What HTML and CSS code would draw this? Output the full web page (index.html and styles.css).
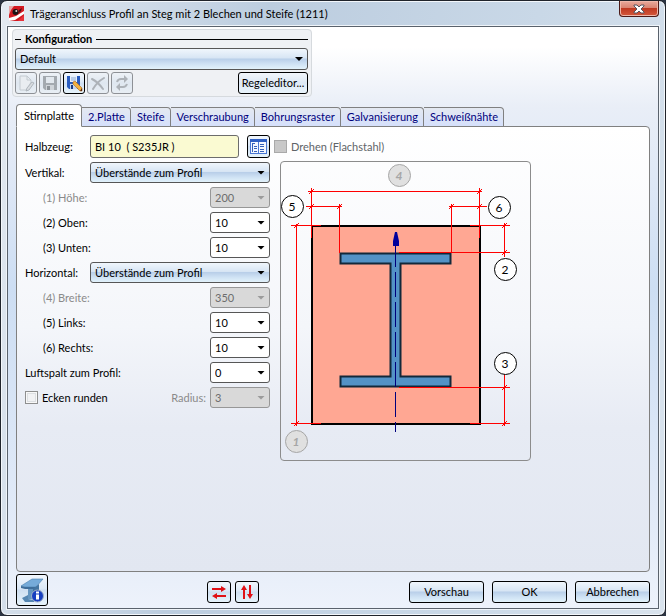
FILE: index.html
```html
<!DOCTYPE html>
<html lang="de">
<head>
<meta charset="utf-8">
<meta name="viewport" content="width=device-width, initial-scale=1">
<title>Trägeranschluss Profil an Steg mit 2 Blechen und Steife (1211)</title>
<link rel="stylesheet" href="styles.css">
</head>
<body>
<div class="window">
  <header class="titlebar">
    <svg class="app-icon" viewBox="0 0 15 15" aria-hidden="true">
      <path fill="#d21a22" d="M0 0h15v15H0z"/>
      <path fill="#e9a9a9" d="M0 0h5L2 4 0 9z"/>
      <path fill="#fff" d="M15 5v3L6 14l-6 1v-3l7-2z"/>
      <path fill="#e8323a" d="M9 15l6-6v6z"/>
      <circle cx="6.500" cy="6" r="3" fill="#1a1214"/>
      <circle cx="7.300" cy="5" r="1" fill="#d8d0d0"/>
      <path fill="#4b1216" d="M10 4l3-2-1 3-3 3z"/>
    </svg>
    <h1 class="title">Trägeranschluss Profil an Steg mit 2 Blechen und Steife (1211)</h1>
    <button class="close" type="button" aria-label="Schließen">
      <svg viewBox="0 0 12 10" aria-hidden="true">
        <path d="M1 1h3l2 2 2-2h3v1L8 5l3 3v1H8L6 7 4 9H1V8l3-3-3-3z" fill="#fff" stroke="#57555f"/>
      </svg>
    </button>
  </header>

  <main class="client">
    <fieldset class="config">
      <legend class="config-head">Konfiguration</legend>
      <div class="combo combo-blue combo-wide">
        <select aria-label="Konfiguration"><option>Default</option></select>
      </div>
      <div class="toolbar">
        <button class="tool" type="button" disabled aria-label="Neu">
          <svg viewBox="0 0 18 18" aria-hidden="true"><path d="M3 2h7l4 4v2l-4 8H3z" fill="#e9edf1" stroke="#c3cad0"/><path d="M10 2v4h4" fill="none" stroke="#c3cad0"/><path d="M15 8l2 1-5 7-3 1 1-3z" fill="#d9dde1" stroke="#b0b7be"/></svg>
        </button>
        <button class="tool" type="button" disabled aria-label="Speichern">
          <svg viewBox="0 0 18 18" aria-hidden="true"><path d="M2 2h14v14H4l-2-2z" fill="#a3a9af"/><path d="M5 3h8v6H5z" fill="#e2e8ee"/><path d="M5 11h8v5H5z" fill="#cfd4d9"/><path d="M6 12h3v4H6z" fill="#8d9399"/></svg>
        </button>
        <button class="tool tool-on" type="button" aria-label="Speichern unter">
          <svg viewBox="0 0 18 18" aria-hidden="true"><path d="M2 2h13v13H4l-2-2z" fill="#2a5cc0"/><path d="M5 2h7v6H5z" fill="#e6f0fc"/><path d="M6 4h5M6 6h5" stroke="#8ba9d4"/><path d="M5 10h7v5H5z" fill="#c3d5ee"/><path d="M6 11h2v4H6z" fill="#173a80"/><path d="M8 8l2-1 7 7v3h-2l-7-7z" fill="#f3b240" stroke="#a8641c" stroke-width=".6"/><path d="M15 17h2v-3z" fill="#5a2610"/></svg>
        </button>
        <button class="tool" type="button" disabled aria-label="Löschen">
          <svg viewBox="0 0 18 18" aria-hidden="true"><path d="M3 5q6 3 11 10M15 4Q8 8 4 15" fill="none" stroke="#adb2b8" stroke-width="2" stroke-linecap="round"/></svg>
        </button>
        <button class="tool" type="button" disabled aria-label="Aktualisieren">
          <svg viewBox="0 0 18 18" aria-hidden="true"><path d="M4 8q1-3 4-3h4M14 10q-1 3-4 3H6" fill="none" stroke="#adb2b8" stroke-width="2"/><path d="M11 1l4 4-4 4zM7 9l-4 4 4 4z" fill="#adb2b8"/></svg>
        </button>
        <button class="btn rule" type="button">Regeleditor...</button>
      </div>
    </fieldset>

    <div class="tabs" role="tablist">
      <button class="tab tab-on" role="tab" aria-selected="true" type="button">Stirnplatte</button>
      <button class="tab" role="tab" type="button">2.Platte</button>
      <button class="tab" role="tab" type="button">Steife</button>
      <button class="tab" role="tab" type="button">Verschraubung</button>
      <button class="tab" role="tab" type="button">Bohrungsraster</button>
      <button class="tab" role="tab" type="button">Galvanisierung</button>
      <button class="tab" role="tab" type="button">Schweißnähte</button>
    </div>

    <section class="panel" role="tabpanel">
      <div class="form">
        <div class="row row-first">
          <label class="name" for="halbzeug">Halbzeug:</label>
          <input class="material" id="halbzeug" type="text" value="BI 10  ( S235JR )">
          <button class="book" type="button" aria-label="Katalog">
            <svg viewBox="0 0 17 17" aria-hidden="true"><path d="M0 1h17v15H0z" fill="#4a78d4"/><path d="M0 1h17v3H0z" fill="#2f60c4"/><path d="M1 4h7v11H1zM9 4h7v11H9z" fill="#f4f8ff"/><path d="M2 5.500h3M4 8.500h3M4 10.500h3M4 13.500h3M10 6.500h4M10 8.500h4M10 11.500h4M10 13.500h4M2.500 6v8" stroke="#3561ba"/></svg>
          </button>
        </div>
        <div class="row">
          <label class="name" for="vertikal">Vertikal:</label>
          <div class="combo combo-blue mode"><select id="vertikal"><option>Überstände zum Profil</option></select></div>
        </div>
        <div class="row sub">
          <label class="name off" for="hoehe">(1) Höhe:</label>
          <div class="combo num combo-off"><select id="hoehe" disabled><option>200</option></select></div>
        </div>
        <div class="row sub">
          <label class="name" for="oben">(2) Oben:</label>
          <div class="combo num"><select id="oben"><option>10</option></select></div>
        </div>
        <div class="row sub">
          <label class="name" for="unten">(3) Unten:</label>
          <div class="combo num"><select id="unten"><option>10</option></select></div>
        </div>
        <div class="row">
          <label class="name" for="horizontal">Horizontal:</label>
          <div class="combo combo-blue mode"><select id="horizontal"><option>Überstände zum Profil</option></select></div>
        </div>
        <div class="row sub">
          <label class="name off" for="breite">(4) Breite:</label>
          <div class="combo num combo-off"><select id="breite" disabled><option>350</option></select></div>
        </div>
        <div class="row sub">
          <label class="name" for="links">(5) Links:</label>
          <div class="combo num"><select id="links"><option>10</option></select></div>
        </div>
        <div class="row sub">
          <label class="name" for="rechts">(6) Rechts:</label>
          <div class="combo num"><select id="rechts"><option>10</option></select></div>
        </div>
        <div class="row">
          <label for="luftspalt">Luftspalt zum Profil:</label>
          <div class="combo num"><select id="luftspalt"><option>0</option></select></div>
        </div>
        <div class="row">
          <input class="check" id="ecken" type="checkbox">
          <label for="ecken">Ecken runden</label>
          <label class="radius off" for="radius">Radius:</label>
          <div class="combo num combo-off"><select id="radius" disabled><option>3</option></select></div>
        </div>
      </div>

      <div class="preview">
        <div class="row">
          <input class="check" id="drehen" type="checkbox" disabled>
          <label class="dim" for="drehen">Drehen (Flachstahl)</label>
        </div>
        <div class="drawing">
          <svg viewBox="281 162 249 298" role="img" aria-label="Stirnplatte mit Profil und Abständen">
            <rect x="312" y="226" width="168" height="198" fill="#ffa793" stroke="#000" stroke-width="2"/>
            <path d="M340.500 253.500h110v10h-50v113h50v10h-110v-10h50v-113h-50z" fill="#5392c6" stroke="#12283a" stroke-width="2"/>
            <path d="M395.500 242v190" stroke="#00007c" stroke-dasharray="25 5" fill="none"/>
            <path d="M393 246h6v-5l-2-9h-2l-2 9z" fill="#00009c"/>
            <g stroke="#f00" fill="none">
              <path d="M308 191.500h174M311.500 188v50M479.500 188v50M306 206.500h36M339.500 204v49M451.500 204v49M449 206.500h38"/>
              <path d="M291 225.500h30M470 225.500h40M296.500 224v202M504.500 223v34M399 252.500h111M399 387.500h111M504.500 374v52M291 423.500h30M470 423.500h40"/>
              <path d="M309 194l5-5M477 194l5-5M309 209l5-5M337 209l5-5M449 209l5-5M477 209l5-5M294 228l5-5M294 426l5-5M502 228l5-5M502 255l5-5M502 390l5-5M502 426l5-5"/>
            </g>
            <g fill="#fff" stroke="#000">
              <circle cx="292.500" cy="206.500" r="11"/><circle cx="499.500" cy="207.500" r="11"/>
              <circle cx="505.500" cy="269.500" r="11"/><circle cx="505.500" cy="363.500" r="11"/>
            </g>
            <g fill="#e0e0e0" stroke="#a6a6a6">
              <circle cx="399.500" cy="175.500" r="11"/><circle cx="296.500" cy="441.500" r="11"/>
            </g>
            <g class="mark">
              <text x="292" y="211">5</text><text x="499" y="212">6</text>
              <text x="505" y="274">2</text><text x="505" y="368">3</text>
            </g>
            <g class="mark mark-off"><text x="399" y="180">4</text><text x="296" y="446">1</text></g>
          </svg>
        </div>
      </div>
    </section>

    <footer class="footer">
      <button class="info" type="button" aria-label="Information">
        <svg viewBox="0 0 26 26" aria-hidden="true"><path d="M2 9L13 2h11l-7 8H6z" fill="#76abd9" stroke="#4c7fae" stroke-width=".6"/><path d="M2 9l4 1h11v2H6l-4-1z" fill="#3f6e9b"/><path d="M9 12h5v10H9z" fill="#6596c0"/><path d="M14 12l6-5v12l-6 4z" fill="#4475a1"/><path d="M3 21l6-3v4l6 1v2H6z" fill="#5687b2"/><circle cx="18.500" cy="19" r="6" fill="#173fc0" stroke="#9fb0c9"/><path d="M17 17.500h3v5h-3zM17 14.500h3v2h-3z" fill="#fff"/></svg>
      </button>
      <div class="swap">
        <button class="swapbtn" type="button" aria-label="Horizontal tauschen">
          <svg viewBox="0 0 16 16" aria-hidden="true"><path d="M1 4h9V2l5 3-5 3V6H1zM15 11H6V9l-5 3 5 3v-2h9z" fill="#e01015"/></svg>
        </button>
        <button class="swapbtn" type="button" aria-label="Vertikal tauschen">
          <svg viewBox="0 0 16 16" aria-hidden="true"><path d="M4 15V6H2l3-5 3 5H6v9zM10 1v9H8l3 5 3-5h-2V1z" fill="#e01015"/></svg>
        </button>
      </div>
      <div class="actions">
        <button class="btn" type="button">Vorschau</button>
        <button class="btn" type="button">OK</button>
        <button class="btn" type="button">Abbrechen</button>
      </div>
    </footer>
  </main>
</div>
</body>
</html>
```

FILE: styles.css
```css
* { box-sizing: border-box; }

:root {
  --glass: linear-gradient(#f0f6fc 0, #d7e5f4 45%, #b9cfe9 50%, #cfe2f4 75%, #e2f2fb 100%);
  --face: "Lato", "Noto Sans", sans-serif;
}

body {
  margin: 0;
  background: #2b3442;
  font: 11px/16px var(--face);
  color: #000;
}

button, select, input { font: inherit; color: inherit; margin: 0; }
button { padding: 0; }
svg { display: block; }

.window {
  display: flex;
  flex-direction: column;
  min-height: 100vh;
  padding: 0 6px 6px;
  border: 1px solid #20242b;
  border-radius: 7px;
  background: linear-gradient(100deg, #e4eaf1 0, #bccddf 35%, #c9d8e7 70%, #d9e3ed 100%);
  box-shadow: inset 0 0 0 1px #f3f7fb;
}

.titlebar { display: flex; align-items: center; height: 25px; gap: 6px; padding-left: 2px; }
.app-icon { width: 15px; height: 15px; }
.title { margin: 0; font-size: 11px; font-weight: 400; flex: 1; }
.close {
  display: grid;
  place-items: center;
  align-self: flex-start;
  width: 40px;
  height: 16px;
  border: 1px solid #4b1a17;
  border-top: 0;
  border-radius: 0 0 4px 4px;
  background: linear-gradient(#e9aa9c 0, #d98472 45%, #bf3a22 50%, #d4583b 100%);
  box-shadow: inset 0 0 0 1px #efb7a9;
}
.close svg { width: 12px; height: 10px; }

.client {
  flex: 1;
  display: flex;
  flex-direction: column;
  padding: 2px 8px 2px 4px;
  border: 1px solid #5a626c;
  box-shadow: 0 0 0 1px #eff4f9;
  background: linear-gradient(#fff 0, #fff 20px, #e9eef7 80px, #dfe8f6 150px, #cddef3 260px, #e3ebf8 500px, #edf2fb 100%);
}

.config {
  align-self: flex-start;
  width: 300px;
  margin: 0;
  padding: 0 3px 2px 2px;
  border: 1px solid #d6dade;
  border-radius: 4px;
  background: #eff1f4;
}
.config-head {
  float: left;
  display: flex;
  align-items: center;
  width: 100%;
  height: 18px;
  padding: 0;
  gap: 4px;
  font-weight: 700;
}
.config-head::before, .config-head::after { content: ""; height: 1px; background: #000; }
.config-head::before { width: 6px; }
.config-head::after { flex: 1; }

.combo { display: grid; height: 21px; }
.combo::after {
  content: "";
  grid-area: 1 / 1;
  place-self: center end;
  width: 8px;
  height: 4px;
  margin-right: 5px;
  background: #000;
  clip-path: polygon(0 0, 100% 0, 50% 100%);
  pointer-events: none;
}
.combo select {
  appearance: none;
  grid-area: 1 / 1;
  min-width: 0;
  padding: 0 4px;
  border: 1px solid #565656;
  border-radius: 3px;
  background: #fff;
}
.combo-blue select { background: var(--glass); }
.combo-wide { clear: both; height: 22px; }
.combo-off select { border-color: #979797; background: #d9d9d9; color: #6d6d6d; opacity: 1; }
.combo-off::after { background: #9b9b9b; }

.toolbar { display: flex; gap: 2px; margin-top: 2px; }
.tool, .swapbtn, .info, .book {
  display: grid;
  place-items: center;
  border: 1px solid #000;
  border-radius: 3px;
  background: linear-gradient(#f2f7fd, #dbe8f6 45%, #cfdff1 50%, #e6f3fb);
}
.tool { width: 22px; height: 22px; }
.tool:disabled { border-color: #8e9196; background: linear-gradient(#eef2f7, #dfe7f0 50%, #e8eef4); }
.tool svg { width: 18px; height: 18px; }

.btn {
  width: 75px;
  height: 22px;
  border: 1px solid #000;
  border-radius: 3px;
  background: var(--glass);
}
.rule { width: 70px; margin-left: auto; background: linear-gradient(#f2f6fb, #dde8f4 50%, #e9f4fb); }

.tabs { display: flex; align-items: flex-end; margin: 7px 0 -1px 4px; z-index: 1; }
.tab {
  height: 20px;
  padding: 0 5px 0 6px;
  border: 1px solid #808080;
  border-left-width: 0;
  border-radius: 0 4px 0 0;
  background: linear-gradient(#e4e9f1, #d5e0fb);
  color: #00007c;
}
.tab-on {
  height: 23px;
  padding: 0 7px;
  border-left-width: 1px;
  border-bottom-color: #fff;
  border-radius: 4px 4px 0 0;
  background: #fff;
  color: #000;
}

.panel {
  flex: 1;
  display: flex;
  gap: 4px;
  margin-left: 4px;
  padding: 7px 8px;
  border: 1px solid #808080;
  border-radius: 0 4px 4px 4px;
  background: linear-gradient(#fff 0, #f4f6fa 200px, #e7ebf4 300px, #e2e7f1 100%);
}
.form { width: 245px; }
.row { display: flex; align-items: center; height: 25px; }
.row-first { margin-bottom: 1px; }
.name { width: 65px; }
.sub { padding-left: 18px; }
.off { color: #8a8a8a; }
.dim { color: #5f6468; }
.mode { width: 180px; }
.num { width: 60px; margin-left: auto; }
.material {
  width: 149px;
  height: 23px;
  padding: 0 4px;
  border: 1px solid #6c6c6c;
  border-radius: 3px;
  background: #fafad2;
  white-space: pre;
}
.book { width: 23px; height: 23px; margin-left: auto; }
.book svg { width: 17px; height: 17px; }
.check {
  appearance: none;
  width: 13px;
  height: 13px;
  margin-right: 4px;
  border: 1px solid #8e8f8f;
  background: #f1f2f4;
  box-shadow: inset 0 0 0 1px #f8f8f8, inset 0 0 0 2px #dcdfe2;
}
.check:disabled { border-color: #a9a9a9; background: #c8c8c8; box-shadow: none; }
.radius { margin-left: auto; }
.radius + .num { margin-left: 4px; }

.drawing {
  width: 251px;
  margin: 2px 0 0 6px;
  border: 1px solid #8c8c8c;
  border-radius: 4px;
}
.mark { font: 12px var(--face); text-anchor: middle; }
.mark-off { font-style: italic; font-weight: 700; fill: #a6a6a6; }

.footer { display: flex; align-items: center; justify-content: space-between; margin: 2px 0 0 4px; }
.info { width: 32px; height: 32px; }
.info svg { width: 26px; height: 26px; }
.swap { display: flex; gap: 4px; padding: 4px 0 0 8px; }
.swapbtn { width: 24px; height: 22px; }
.swapbtn svg { width: 16px; height: 16px; }
.actions { display: flex; gap: 8px; padding-top: 4px; }
```
